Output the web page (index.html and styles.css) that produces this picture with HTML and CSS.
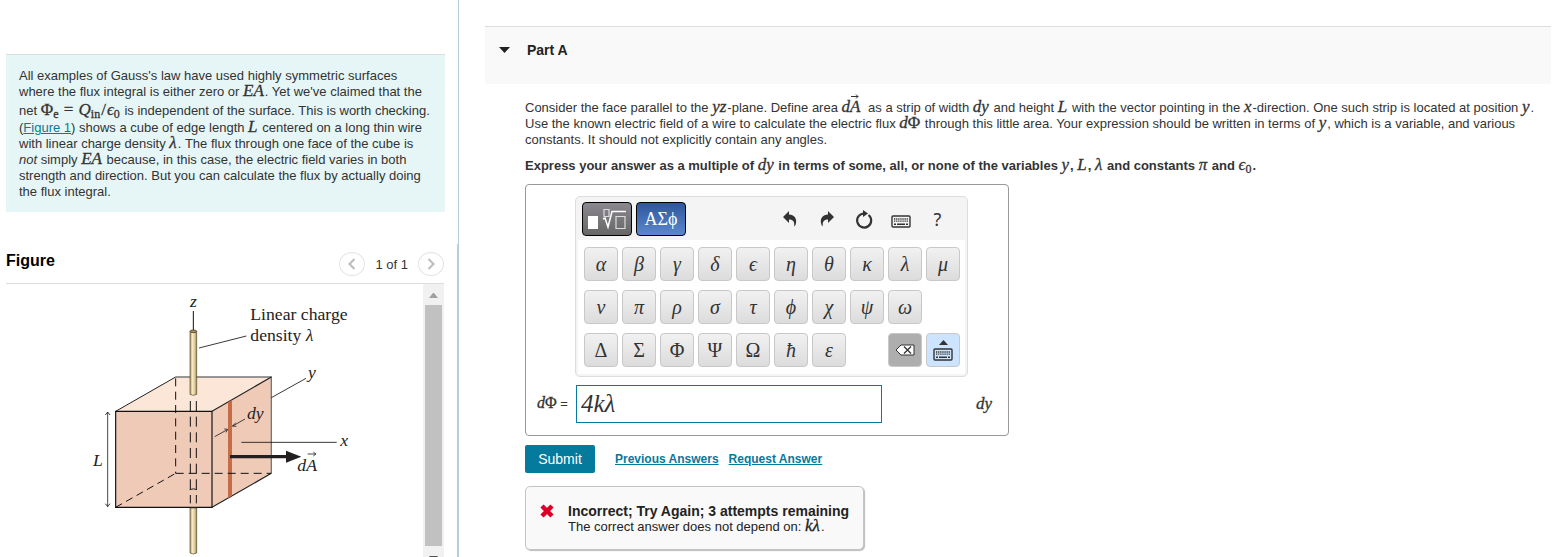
FILE: index.html
```html
<!DOCTYPE html>
<html lang="en">
<head>
<meta charset="utf-8">
<title>Gauss's law: flux through a cube</title>
<link rel="stylesheet" href="styles.css">
</head>
<body>
<svg class="defs" aria-hidden="true">
  <symbol id="keyboard" viewBox="0 0 20 13">
    <rect x="1" y="1" width="18" height="11" rx="1" fill="none" stroke="#333" stroke-width="1.4"/>
    <path d="M3 4h14M3 6.2h14" stroke="#333" stroke-width="1.3" stroke-dasharray="1.3 .8"/>
    <path d="M3 9.2h2M6 9.2h8M15 9.2h2" stroke="#333" stroke-width="1.5"/>
  </symbol>
</svg>
<div class="page">
  <aside class="side">
    <section class="intro">
      All examples of Gauss's law have used highly symmetric surfaces<br>
      where the flux integral is either zero or <i class="m">EA</i>. Yet we've claimed that the<br>
      net <span class="m tall">Φ<span class="sub">e</span> <span class="rel">=</span> <i>Q</i><span class="sub">in</span><span class="rel">/</span><i>ϵ</i><span class="sub">0</span></span> is independent of the surface. This is worth checking.<br>
      (<a href="#figure">Figure 1</a>) shows a cube of edge length <i class="m">L</i> centered on a long thin wire<br>
      with linear charge density <i class="m">λ</i>. The flux through one face of the cube is<br>
      <em>not</em> simply <i class="m">EA</i> because, in this case, the electric field varies in both<br>
      strength and direction. But you can calculate the flux by actually doing<br>
      the flux integral.
    </section>
    <section class="figure" id="figure">
      <header class="figure-head">
        <h2>Figure</h2>
        <nav class="pager" aria-label="Figures">
          <button class="round" aria-label="Previous figure"><svg width="8" height="12" viewBox="0 0 8 12"><path d="M6.5 1l-5 5 5 5"/></svg></button>
          <span class="count">1 of 1</span>
          <button class="round" aria-label="Next figure"><svg width="8" height="12" viewBox="0 0 8 12"><path d="M1.5 1l5 5-5 5"/></svg></button>
        </nav>
      </header>
      <div class="figure-body">
        <div class="figure-view">
          <svg class="cube" width="290" height="272" viewBox="0 0 870 816" role="img" aria-label="Cube centered on a charged wire">
            <defs>
              <linearGradient id="wire"><stop offset="0" stop-color="#a89668"/><stop offset=".35" stop-color="#f7ebc6"/><stop offset=".7" stop-color="#e0cb94"/><stop offset="1" stop-color="#9a8452"/></linearGradient>
            </defs>
            <path d="M107 379 287 276H574L396 379z" fill="#fce6d8"/>
            <path d="M107 379H396V667H107zM396 379 574 276V565L396 667z" fill="#efcab7"/>
            <path d="M287 276H574V565" fill="none" stroke="#777" stroke-width="4"/>
            <path d="M574 276 396 379M396 667 574 565" stroke="#222" stroke-width="3.5"/>
            <path d="M107 379 287 276" stroke="#222" stroke-width="3"/>
            <path d="M444 352 456 345V632L444 639z" fill="#c46d47"/>
            <path d="M107 379H396V667H107z" fill="none" stroke="#111" stroke-width="3.5"/>
            <path d="M287 280V565" stroke="#111" stroke-width="3" stroke-dasharray="24 16"/>
            <path d="M287 565H574" stroke="#111" stroke-width="3" stroke-dasharray="24 15"/>
            <path d="M107 667 287 565" stroke="#111" stroke-width="3" stroke-dasharray="22 14"/>
            <path d="M331 348V655M349 348V655" stroke="#111" stroke-width="3" stroke-dasharray="30 17"/>
            <path d="M329 614q11-5 22 0" fill="none" stroke="#222" stroke-width="3"/>
            <path d="M340 78V140" stroke="#111" stroke-width="3"/>
            <path d="M330 139V328q10 6 20 0V139z" fill="url(#wire)" stroke="#54472b" stroke-width="2"/>
            <ellipse cx="340" cy="139" rx="10" ry="4" fill="#aa8f5d" stroke="#332b19" stroke-width="2"/>
            <path d="M330 669V804q10 6 20 0V669z" fill="url(#wire)" stroke="#54472b" stroke-width="2"/>
            <path d="M357 189 499 153M574 338 678 280M484 472H770" stroke="#111" stroke-width="2.5"/>
            <path d="M404 455 442 434M433 432l10 1-5 9M495 402 458 423M467 414l-10 9 12 1M83 381V665M76 390l7-9 7 9M76 656l7 9 7-9" fill="none" stroke="#222" stroke-width="2.5"/>
            <path d="M450 515H624" stroke="#231f20" stroke-width="10"/>
            <path d="M618 497 664 515 618 533z" fill="#231f20"/>
            <path d="M683 507H706M700 501l8 6-8 6" fill="none" stroke="#222" stroke-width="2.5"/>
            <g class="labels">
              <text x="511" y="105">Linear charge</text>
              <text x="511" y="168">density <tspan class="it">λ</tspan></text>
              <g class="it"><text x="330" y="66">z</text><text x="684" y="280">y</text><text x="501" y="402">dy</text><text x="781" y="484">x</text><text x="39" y="543">L</text><text x="652" y="559">dA</text></g>
            </g>
          </svg>
        </div>
        <div class="scrollbar" aria-hidden="true">
          <svg width="21" height="21"><path d="M6 14l4-5h1l4 5z" fill="#a0a0a0"/></svg>
          <div class="thumb"></div>
          <svg width="21" height="21"><path d="M6 10h9l-4 5h-1z" fill="#505050"/></svg>
        </div>
      </div>
    </section>
  </aside>

  <main class="main">
    <header class="part-head">
      <svg width="12" height="6" viewBox="0 0 12 6" aria-hidden="true"><path d="M0 0h11L5.5 6z" fill="#222"/></svg>
      <h1>Part A</h1>
    </header>
    <div class="content">
      <p>Consider the face parallel to the <i class="m">yz</i>-plane. Define area <i class="m vec">dA<svg width="8" height="5" viewBox="0 0 8 5"><path d="M0 2.5h7M5 .5l2 2-2 2" fill="none" stroke="#333"/></svg></i> as a strip of width <i class="m">dy</i> and height <i class="m">L</i> with the vector pointing in the <i class="m">x</i>-direction. One such strip is located at position <i class="m">y</i>.<br>
      Use the known electric field of a wire to calculate the electric flux <span class="m"><i>d</i>Φ</span> through this little area. Your expression should be written in terms of <i class="m">y</i>, which is a variable, and various<br>
      constants. It should not explicitly contain any angles.</p>
      <p class="strong">Express your answer as a multiple of <i class="m">dy</i> in terms of some, all, or none of the variables <i class="m">y</i>, <i class="m">L</i>, <i class="m">λ</i> and constants <i class="m">π</i> and <span class="m"><i>ϵ</i><span class="sub">0</span></span>.</p>

      <form class="answer-form">
        <div class="answer">
          <div class="pad">
            <div class="tools">
              <button type="button" class="mode templates" aria-label="Templates"><svg width="38" height="22" viewBox="0 0 38 22"><path d="M0 8h10v13H0z" fill="#fff"/><path d="M16 1.5h5v7h-5zM28 8.5h9v12h-9z" fill="none" stroke="#ddd" stroke-width="1.2"/><path d="M15 11l2-1 3 9 4-15.5h14" fill="none" stroke="#fff" stroke-width="1.5"/></svg></button>
              <button type="button" class="mode greek">ΑΣϕ</button>
              <div class="actions">
                <button type="button" class="tool" aria-label="Undo"><svg width="14" height="16" viewBox="0 0 14 16"><path d="M0 6 6 0v3.5C11 4 14 7 13 12q0 2-2 3.5C12 11 10 8.5 6 8.5V12z" fill="#333"/></svg></button>
                <button type="button" class="tool" aria-label="Redo"><svg width="14" height="16" viewBox="0 0 14 16"><path d="M14 6 8 0v3.5C3 4 0 7 1 12q0 2 2 3.5C2 11 4 8.5 8 8.5V12z" fill="#333"/></svg></button>
                <button type="button" class="tool" aria-label="Reset"><svg width="18" height="19" viewBox="0 0 18 19"><path d="M13.5 5A7 7 0 1 1 9 3.5" fill="none" stroke="#333" stroke-width="2.2"/><path d="M8 0l5 3.5L8 7z" fill="#333"/></svg></button>
                <button type="button" class="tool" aria-label="Keyboard shortcuts"><svg class="low" width="20" height="13"><use href="#keyboard"/></svg></button>
                <button type="button" class="tool help" aria-label="Help">?</button>
              </div>
            </div>
            <div class="keys">
              <button type="button" class="key">α</button><button type="button" class="key">β</button><button type="button" class="key">γ</button><button type="button" class="key">δ</button><button type="button" class="key">ϵ</button><button type="button" class="key">η</button><button type="button" class="key">θ</button><button type="button" class="key">κ</button><button type="button" class="key">λ</button><button type="button" class="key">μ</button>
              <button type="button" class="key">ν</button><button type="button" class="key">π</button><button type="button" class="key">ρ</button><button type="button" class="key">σ</button><button type="button" class="key">τ</button><button type="button" class="key">ϕ</button><button type="button" class="key">χ</button><button type="button" class="key">ψ</button><button type="button" class="key">ω</button>
              <button type="button" class="key cap first">Δ</button><button type="button" class="key cap">Σ</button><button type="button" class="key cap">Φ</button><button type="button" class="key cap">Ψ</button><button type="button" class="key cap">Ω</button><button type="button" class="key">ħ</button><button type="button" class="key">ε</button>
              <button type="button" class="key erase" aria-label="Delete"><svg width="20" height="12" viewBox="0 0 20 12"><path d="M1 6 6 1h13v10H6z" fill="#fff" stroke="#333"/><path d="M9 2.5l7 7M16 2.5l-7 7" stroke="#333" stroke-width="1.3"/></svg></button>
              <button type="button" class="key hide" aria-label="Hide keyboard"><svg width="9" height="5" viewBox="0 0 9 5"><path d="M0 5 4.5 0 9 5z" fill="#333"/></svg><svg width="20" height="13"><use href="#keyboard"/></svg></button>
            </div>
          </div>
          <div class="entry">
            <label for="flux"><span class="m"><i>d</i>Φ</span> =</label>
            <input id="flux" type="text" value="4kλ">
            <i class="m unit">dy</i>
          </div>
        </div>
        <div class="submit-row">
          <button type="button" class="submit">Submit</button>
          <a href="#previous">Previous Answers</a>
          <a href="#request">Request Answer</a>
        </div>
      </form>

      <section class="feedback">
        <svg width="14" height="14" viewBox="0 0 14 14" aria-hidden="true"><path d="M2 2l10 10M12 2 2 12" stroke="#dc0028" stroke-width="4.5"/></svg>
        <div>
          <h3>Incorrect; Try Again; 3 attempts remaining</h3>
          <p>The correct answer does not depend on: <i class="m">kλ</i>.</p>
        </div>
      </section>
    </div>
  </main>
</div>
</body>
</html>
```
FILE: styles.css
```css
* { box-sizing: border-box; }
body {
  margin: 0;
  background: #fff;
  color: #333;
  font: 13px/16px "Liberation Sans", Arial, sans-serif;
}
h1, h2, h3, p { margin: 0; }
button { padding: 0; font: inherit; color: inherit; }
a { color: #047a9c; }
.defs { position: absolute; width: 0; height: 0; }
.page { display: flex; height: 100vh; overflow: hidden; }

/* Inline mathematics */
.m {
  padding: 0 1px 0 0;
  font-family: "Liberation Serif", "Times New Roman", serif;
  font-size: 17px;
  font-weight: normal;
  line-height: 0;
  -webkit-text-stroke: 0.3px currentColor;
}
.tall { line-height: 20px; }
.rel { padding: 0 1px; }
.sub { font-size: 12px; line-height: 0; vertical-align: -3px; }

/* Left column */
.side {
  flex: 0 0 459px;
  display: flex;
  flex-direction: column;
  padding-top: 54px;
  border-right: 1px solid #b9cde0;
}
.intro {
  margin: 0 13px 0 6px;
  padding: 13px 0 12px 13px;
  border-top: 1px solid #ddd;
  background: #e6f6f6;
  white-space: nowrap;
}
.figure {
  flex: 1;
  display: flex;
  flex-direction: column;
  min-height: 0;
  margin-top: 32px;
  padding: 0 13px 0 6px;
  border-right: 1px solid #b9cde0;
}
.figure-head {
  display: flex;
  align-items: center;
  justify-content: space-between;
  height: 40px;
  border-bottom: 1px solid #ddd;
}
.figure-head h2 { color: #000; font-size: 16px; line-height: 20px; padding-bottom: 6px; }
.pager { display: flex; align-items: center; gap: 10px; }
.count { padding-top: 2px; }
.round {
  display: grid;
  place-items: center;
  width: 26px;
  height: 24px;
  border: 1px solid #e4e4e4;
  border-radius: 50%;
  background: #fff;
}
.round path { fill: none; stroke: #bbb; stroke-width: 2; }
.figure-body { flex: 1; display: flex; min-height: 0; overflow: hidden; }
.figure-view { flex: 1; padding: 1px 0 0 74px; }
.cube { display: block; }
.labels { font-family: "Liberation Serif", "Times New Roman", serif; font-size: 53px; fill: #222; }
.it { font-style: italic; }
.scrollbar { width: 21px; background: #f1f1f1; }
.scrollbar svg { display: block; }
.thumb { height: 241px; margin: 0 2px; background: #c1c1c1; }

/* Right column */
.main { flex: 1; min-width: 0; padding: 26px 17px 0 26px; }
.part-head {
  display: flex;
  align-items: center;
  gap: 16px;
  height: 58px;
  padding: 0 14px 12px;
  border-top: 1px solid #ddd;
  background: #f9f9f9;
}
.part-head h1 { color: #222; font-size: 14px; line-height: 18px; }
.content { padding: 16px 0 0 40px; }
.content p { white-space: nowrap; }
.content .strong { margin: 10px 0 10px; font-weight: bold; }
.vec { position: relative; padding-right: 4px; }
.vec svg { position: absolute; top: -3px; right: 5px; }

.answer {
  width: 484px;
  max-width: 100%;
  padding: 11px 11px 12px;
  border: 1px solid #999;
  border-radius: 4px;
}
.pad {
  width: 393px;
  margin-left: 38px;
  padding: 2px;
  border: 1px solid #ddd;
  border-radius: 5px;
  background: #f4f4f4;
}
.tools { display: flex; gap: 4px; height: 41px; padding: 3px 9px 4px 4px; }
.mode {
  display: grid;
  place-items: center;
  width: 50px;
  height: 34px;
  border: 1px solid #000;
  border-radius: 4px;
  color: #fff;
}
.templates { background: linear-gradient(#8b8890, #666); }
.greek { background: linear-gradient(#2f569c, #5c87cc); font: 18px/20px "Liberation Serif", serif; }
.actions { display: flex; margin-left: auto; }
.tool { display: grid; place-items: center; width: 37px; height: 34px; border: 0; background: none; }
.help { font: 18px/20px "Noto Sans", sans-serif; }
.low { margin-top: 4px; }
.keys {
  display: grid;
  grid-template-columns: repeat(10, 34px);
  gap: 9px 4px;
  padding: 7px 6px 7px;
  background: #fff;
}
.key {
  display: grid;
  place-content: center;
  justify-items: center;
  height: 34px;
  border: 1px solid #c8c8c8;
  border-radius: 4px;
  background: linear-gradient(#f1f1f1, #dcdcdc);
  font: italic 20px/20px "Liberation Serif", serif;
}
.cap { font-style: normal; }
.first { grid-column-start: 1; }
.erase { grid-column-start: 9; background: #aeaeae; }
.hide { gap: 3px; background: #cce4ff; }

.entry { display: flex; align-items: center; margin-top: 8px; }
.entry label { width: 39px; white-space: nowrap; }
.entry label .m { padding: 0; font-size: 16px; }
.entry input {
  width: 306px;
  height: 38px;
  padding: 0 4px;
  border: 1px solid #047a9c;
  color: #333;
  font: italic 25px/30px "Liberation Serif", serif;
}
.unit { margin-left: auto; padding-right: 5px; }

.submit-row { display: flex; align-items: center; margin-top: 9px; font-weight: bold; font-size: 12px; }
.submit-row a { margin-right: 10px; }
.submit {
  width: 70px;
  height: 28px;
  margin-right: 20px;
  border: 0;
  border-radius: 2px;
  background: #047a9c;
  color: #fff;
  font-size: 14px;
  font-weight: normal;
}
.feedback {
  display: flex;
  gap: 14px;
  width: 339px;
  height: 64px;
  margin-top: 13px;
  padding: 16px 14px;
  border: 1px solid #c4c4c4;
  border-radius: 5px;
  background: #f9f9f9;
  box-shadow: 1px 1px 1px #bbb;
  color: #222;
}
.feedback svg { flex: none; margin-top: 1px; }
.feedback h3 { font-size: 14px; line-height: 16px; white-space: nowrap; }
```
